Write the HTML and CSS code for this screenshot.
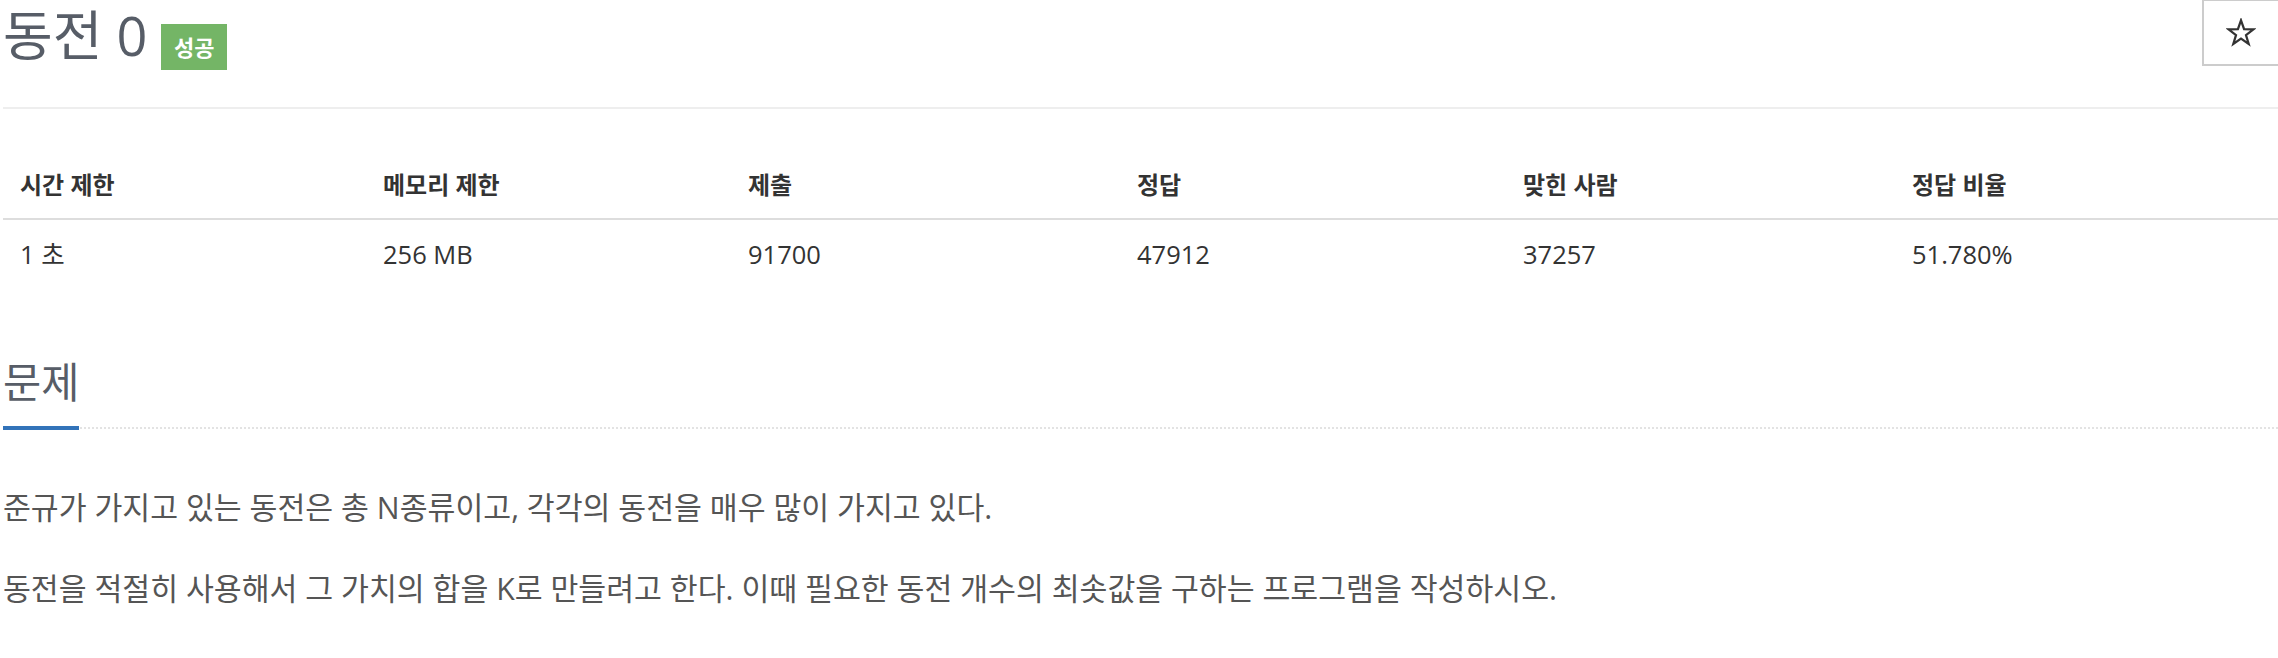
FILE: index.html
```html
<!DOCTYPE html>
<html lang="ko">
<head>
<meta charset="utf-8">
<title>동전 0</title>
<link rel="stylesheet" href="styles.css">
</head>
<body>
<div class="page">
  <div class="header">
    <h1 class="title">동전 0</h1>
    <span class="badge">성공</span>
    <button class="star" type="button" aria-label="즐겨찾기">
      <svg class="star-icon" viewBox="-2 -2 32 31" width="30" height="29" aria-hidden="true">
        <path d="M14 0.5 L17.29 9.97 L27.31 10.17 L19.33 16.23 L22.23 25.83 L14 20.1 L5.77 25.83 L8.67 16.23 L0.69 10.17 L10.71 9.97 Z" fill="none" stroke="#333" stroke-width="2.4" stroke-linejoin="miter"/>
      </svg>
    </button>
  </div>

  <div class="stats">
    <div class="cell head">시간 제한</div>
    <div class="cell head">메모리 제한</div>
    <div class="cell head">제출</div>
    <div class="cell head">정답</div>
    <div class="cell head">맞힌 사람</div>
    <div class="cell head">정답 비율</div>
    <div class="cell">1 초</div>
    <div class="cell">256 MB</div>
    <div class="cell">91700</div>
    <div class="cell">47912</div>
    <div class="cell">37257</div>
    <div class="cell">51.780%</div>
  </div>

  <h2 class="section-title"><span class="section-label">문제</span></h2>
  <div class="problem">
    <p>준규가 가지고 있는 동전은 총 N종류이고, 각각의 동전을 매우 많이 가지고 있다.</p>
    <p>동전을 적절히 사용해서 그 가치의 합을 K로 만들려고 한다. 이때 필요한 동전 개수의 최솟값을 구하는 프로그램을 작성하시오.</p>
  </div>
</div>
</body>
</html>
```

FILE: styles.css
```css
html, body {
  margin: 0;
  padding: 0;
  background: #fff;
  overflow: hidden;
}

body {
  font-family: "Open Sans", "Noto Sans CJK KR", sans-serif;
  color: #333;
}

.page {
  padding-left: 3px;
  margin-right: -4px;
}

.header {
  display: flex;
  align-items: flex-start;
  height: 107px;
  border-bottom: 2px solid #eeeeee;
}

.title {
  margin: 0;
  font-size: 54px;
  line-height: 70px;
  font-weight: 400;
  color: #575d67;
}

.badge {
  margin-top: 24px;
  margin-left: 14px;
  width: 66px;
  height: 46px;
  line-height: 46px;
  text-align: center;
  font-size: 22px;
  font-weight: 700;
  color: #fff;
  background: #74b566;
}

.star {
  margin-left: auto;
  margin-top: -1px;
  width: 80px;
  height: 67px;
  box-sizing: border-box;
  border: 2px solid #cccccc;
  background: #fff;
  padding: 0 2px 0 0;
  display: flex;
  align-items: center;
  justify-content: center;
}

.star-icon {
  display: block;
}

.stats {
  display: grid;
  grid-template-columns: 363px 365px 389px 386px 389px 1fr;
}

.cell {
  padding: 19px 0 0 17px;
  height: 30px;
  line-height: 30px;
  font-size: 25.5px;
  color: #333;
}

.cell.head {
  font-size: 24px;
  font-weight: 700;
  padding-top: 61px;
  padding-bottom: 18px;
  border-bottom: 2px solid #dddddd;
}

.section-title {
  margin: 88px 0 0 0;
  display: flex;
  font-size: 41.5px;
  line-height: 50px;
  font-weight: 400;
  color: #575d67;
  padding-bottom: 19px;
  border-bottom: 2px dotted #e3e3e3;
}

.section-label {
  display: block;
  padding-bottom: 19px;
  margin-bottom: -22px;
  border-bottom: 4px solid #3273b9;
}

.problem {
  padding-top: 56px;
}

.problem p {
  margin: 0 0 35px 0;
  font-size: 30.3px;
  line-height: 46px;
  color: #555;
}
```
